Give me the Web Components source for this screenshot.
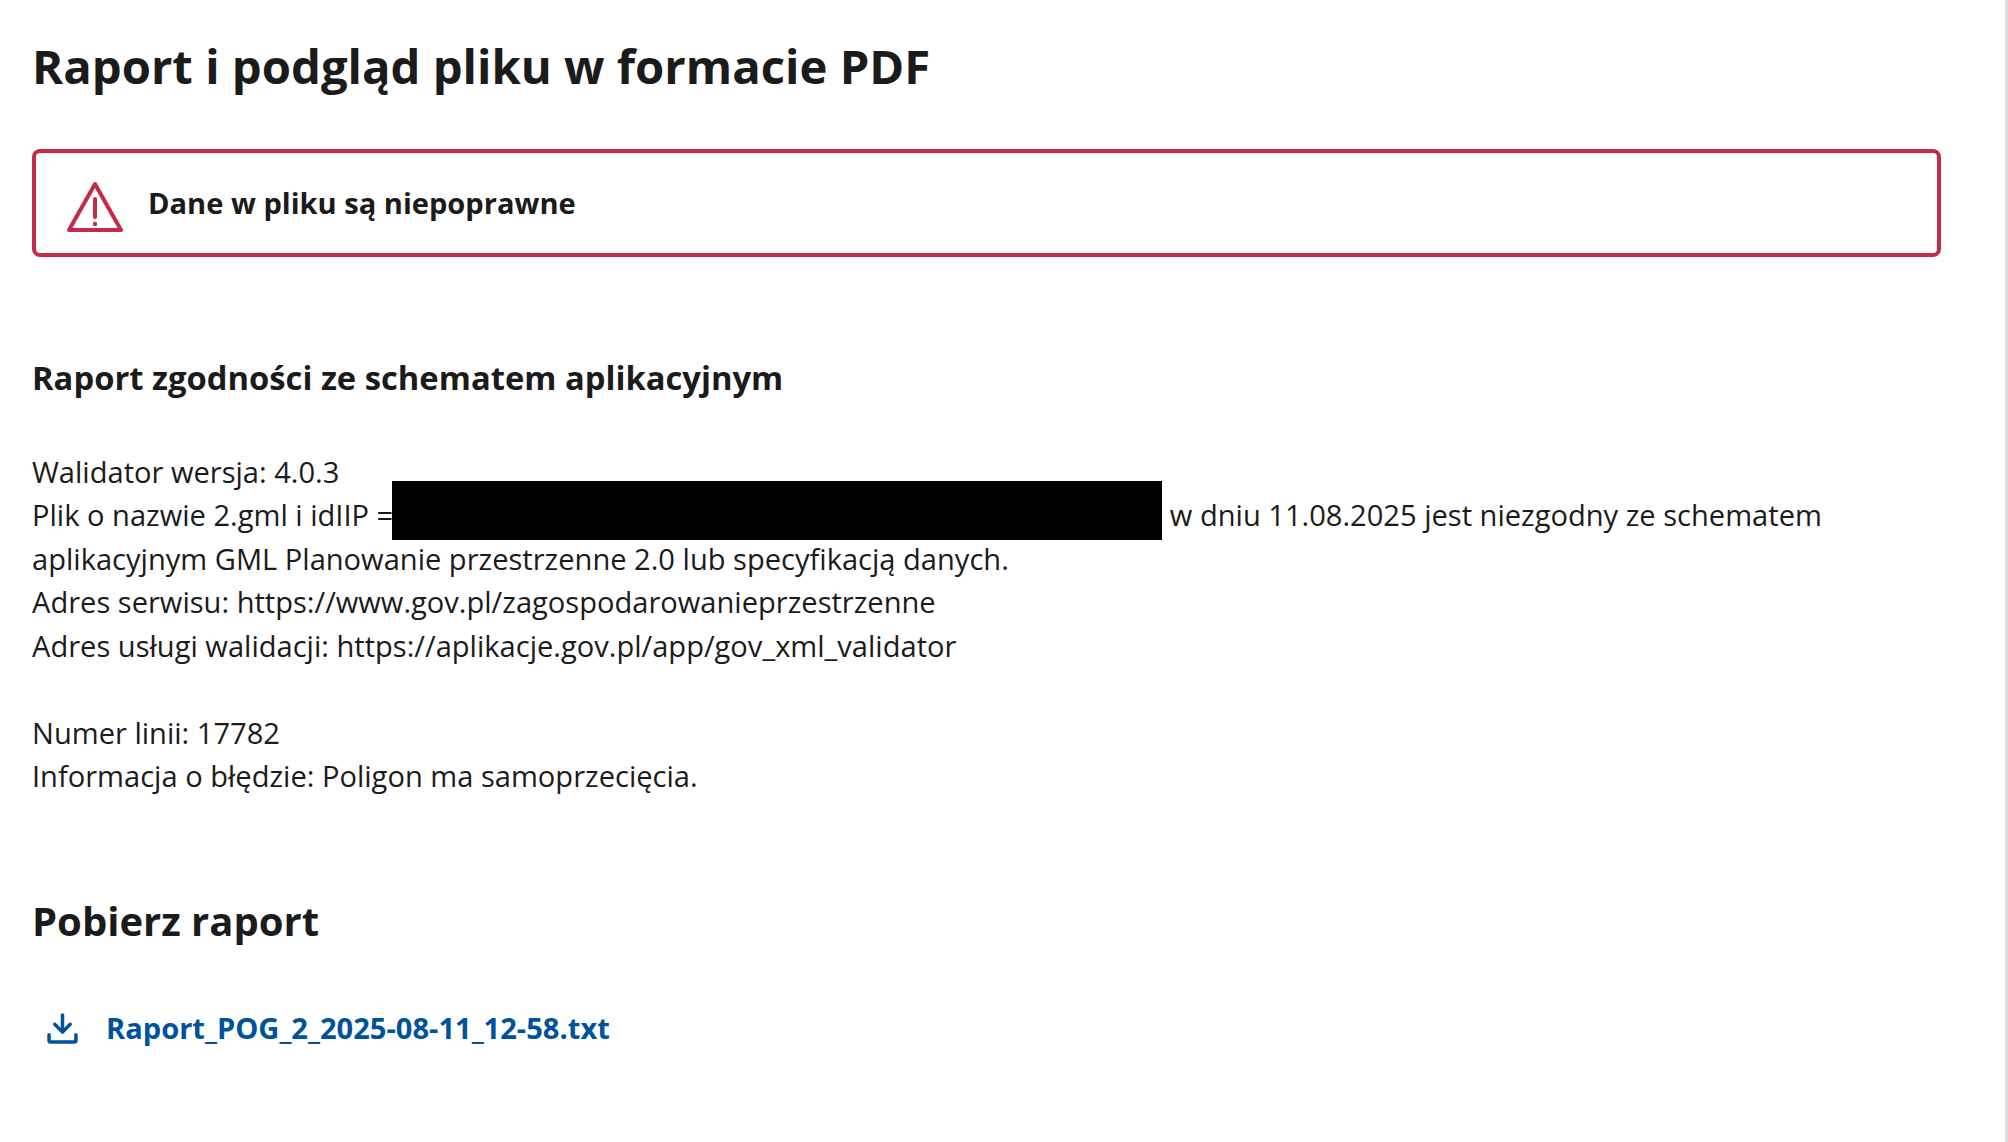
<!DOCTYPE html>
<html lang="pl">
<head>
<meta charset="utf-8">
<title>Raport</title>
<style>
  html, body { margin: 0; background: #fff; }
  body { font-family: "Open Sans", sans-serif; color: #1b1b1b; }
</style>
</head>
<body>
<report-page>
  <h-title>Raport i podgląd pliku w formacie PDF</h-title>
  <alert-box>Dane w pliku są niepoprawne</alert-box>
  <report-body></report-body>
  <download-section file="Raport_POG_2_2025-08-11_12-58.txt"></download-section>
</report-page>

<script>
class ReportPage extends HTMLElement {
  constructor() {
    super();
    this.attachShadow( { mode: 'open' } ).innerHTML = `
    <style>
      :host { display: flex; height: 1142px; overflow: hidden; box-sizing: border-box; }
      #content { flex: 1; padding: 0 0 0 32px; }
      #line { width: 3px; background: #d4dce4; }
    </style>
    <div id="content"><slot></slot></div>
    <div id="line"></div>
    `;
  }
}

class HTitle extends HTMLElement {
  constructor() {
    super();
    this.attachShadow( { mode: 'open' } ).innerHTML = `
    <style>
      :host { display: block; font-size: 47.25px; font-weight: 700; line-height: 60px; padding-top: 36px; }
    </style>
    <slot></slot>
    `;
  }
}

class AlertBox extends HTMLElement {
  constructor() {
    super();
    this.attachShadow( { mode: 'open' } ).innerHTML = `
    <style>
      :host {
        display: flex; align-items: center; gap: 25.5px; box-sizing: border-box;
        width: 1909px; height: 108px; margin-top: 53px; padding-left: 30.5px;
        border: 4px solid #c42b47; border-radius: 8px;
        font-size: 29.08px; font-weight: 700;
      }
      svg { display: block; width: 56px; height: 52px; margin-top: 7px; }
    </style>
    <svg viewBox="0 0 56 52" fill="none" stroke="#c42b47" stroke-width="4" stroke-linejoin="round" stroke-linecap="round">
      <path d="M28 3 L54 49 H2 Z"/>
      <path d="M28 18 V36"/>
      <circle cx="28" cy="43" r="1.2" fill="#c42b47" stroke-width="2"/>
    </svg>
    <span><slot></slot></span>
    `;
  }
}

class ReportBody extends HTMLElement {
  constructor() {
    super();
    this.attachShadow( { mode: 'open' } ).innerHTML = `
    <style>
      :host { display: block; width: 1909px; }
      h2 { margin: 98.5px 0 0; font-size: 32.75px; font-weight: 700; line-height: 44px; }
      p { margin: 51.4px 0 0; font-size: 29.08px; line-height: 43.5px; }
      p + p { margin-top: 43.5px; }
      .hidden {
        display: inline-block; width: 770px; height: 59px; background: #000;
        vertical-align: middle; margin: -22.4px 0 -6.6px -8.5px;
      }
    </style>
    <h2>Raport zgodności ze schematem aplikacyjnym</h2>
    <p>Walidator wersja: 4.0.3<br>
    Plik o nazwie 2.gml i idIIP = <span class="hidden"></span> w dniu 11.08.2025 jest niezgodny ze schematem<br>
    aplikacyjnym GML Planowanie przestrzenne 2.0 lub specyfikacją danych.<br>
    Adres serwisu: https://www.gov.pl/zagospodarowanieprzestrzenne<br>
    Adres usługi walidacji: https://aplikacje.gov.pl/app/gov_xml_validator</p>
    <p>Numer linii: 17782<br>
    Informacja o błędzie: Poligon ma samoprzecięcia.</p>
    `;
  }
}

class DownloadSection extends HTMLElement {
  constructor() {
    super();
    const file = this.getAttribute( 'file' );
    this.attachShadow( { mode: 'open' } ).innerHTML = `
    <style>
      :host { display: block; }
      h2 { margin: 96.3px 0 0; font-size: 40px; font-weight: 700; line-height: 52px; }
      a {
        display: flex; align-items: center; gap: 28px; margin-top: 59px; padding-left: 15px;
        color: #00529c; font-size: 29.08px; font-weight: 700; text-decoration: none; line-height: 44px;
      }
      svg { display: block; width: 31px; height: 31px; }
    </style>
    <h2>Pobierz raport</h2>
    <a href="#">
      <svg viewBox="0 0 30 30" fill="none" stroke="#00529c" stroke-width="3.4" stroke-linecap="round" stroke-linejoin="round">
        <path d="M15 2 V18"/>
        <path d="M7.5 11 L15 18.5 L22.5 11"/>
        <path d="M2 21 V26.5 Q2 28 3.5 28 H26.5 Q28 28 28 26.5 V21"/>
      </svg>
      <span>${file}</span>
    </a>
    `;
  }
}

customElements.define( 'report-page', ReportPage );
customElements.define( 'h-title', HTitle );
customElements.define( 'alert-box', AlertBox );
customElements.define( 'report-body', ReportBody );
customElements.define( 'download-section', DownloadSection );
</script>
</body>
</html>
